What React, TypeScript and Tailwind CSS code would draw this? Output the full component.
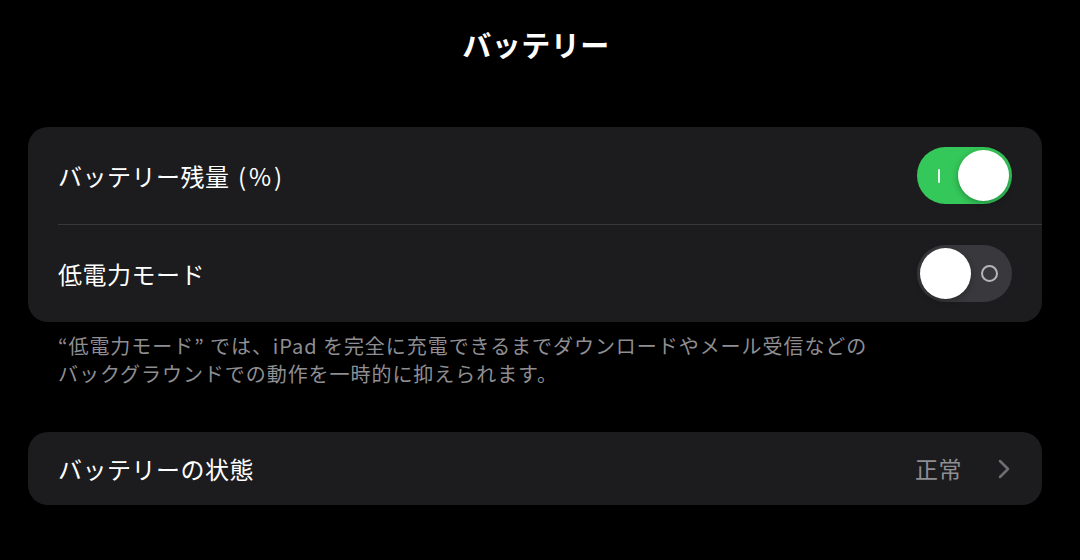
import { useState } from 'react';

function Toggle({ on, onChange }: { on: boolean; onChange: () => void }) {
  return (
    <button
      onClick={onChange}
      className={`relative flex h-[57px] w-[95px] items-center rounded-full p-[3px] ${
        on ? 'bg-[#34c759] justify-end' : 'bg-[#39393d] justify-start'
      }`}
    >
      {on ? (
        <span className="absolute left-[21px] top-[22px] h-[14px] w-[2px] rounded bg-white/90" />
      ) : (
        <span className="absolute right-[14px] top-[20px] h-[17px] w-[17px] rounded-full border-2 border-[#b5b5ba]" />
      )}
      <span className="relative h-[51px] w-[51px] rounded-full bg-white shadow-[0_2px_6px_rgba(0,0,0,0.3)]" />
    </button>
  );
}

export default function App() {
  const [percent, setPercent] = useState(true);
  const [lowPower, setLowPower] = useState(false);

  return (
    <div
      className="h-[560px] w-[1080px] bg-black text-white"
      style={{ fontFamily: '"Noto Sans CJK JP", "Noto Sans", sans-serif' }}
    >
      {/* Title */}
      <div className="flex h-[92px] items-center justify-center pb-[2px]">
        <h1 className="mr-[8px] text-[29px] font-bold tracking-[0.5px]">バッテリー</h1>
      </div>

      <div className="pl-[28px] pr-[38px] pt-[35px]">
        {/* Toggles */}
        <div className="rounded-[20px] bg-[#1c1c1e]">
          <div className="flex h-[97px] items-center justify-between pl-[30px] pr-[30px]">
            <span className="text-[24px] tracking-[0.5px]">
              バッテリー残量<span className="tracking-[3px]"> (%)</span>
            </span>
            <Toggle on={percent} onChange={() => setPercent(!percent)} />
          </div>
          <div className="ml-[30px] h-px bg-[#38383a]" />
          <div className="flex h-[97px] items-center justify-between pl-[30px] pr-[30px]">
            <span className="text-[24px] tracking-[0.5px]">低電力モード</span>
            <Toggle on={lowPower} onChange={() => setLowPower(!lowPower)} />
          </div>
        </div>

        <p className="px-[30px] pt-[10px] text-[20px] leading-[28px] tracking-[0.95px] text-[#8e8e93]">
          “低電力モード” では、iPad を完全に充電できるまでダウンロードやメール受信などの
          <br />
          バックグラウンドでの動作を一時的に抑えられます。
        </p>

        {/* Battery health */}
        <div className="mt-[44px] flex h-[73px] items-center justify-between rounded-[20px] bg-[#1c1c1e] pl-[30px] pr-[32px]">
          <span className="text-[24px] tracking-[0.5px]">バッテリーの状態</span>
          <div className="flex items-center gap-[36px] text-[#8e8e93]">
            <span className="text-[23px] tracking-[0.5px]">正常</span>
            <svg width="12" height="20" viewBox="0 0 12 20" fill="none">
              <path d="M2 2l8 8-8 8" stroke="#6e6e73" strokeWidth="2.5" strokeLinecap="round" strokeLinejoin="round" />
            </svg>
          </div>
        </div>
      </div>
    </div>
  );
}
